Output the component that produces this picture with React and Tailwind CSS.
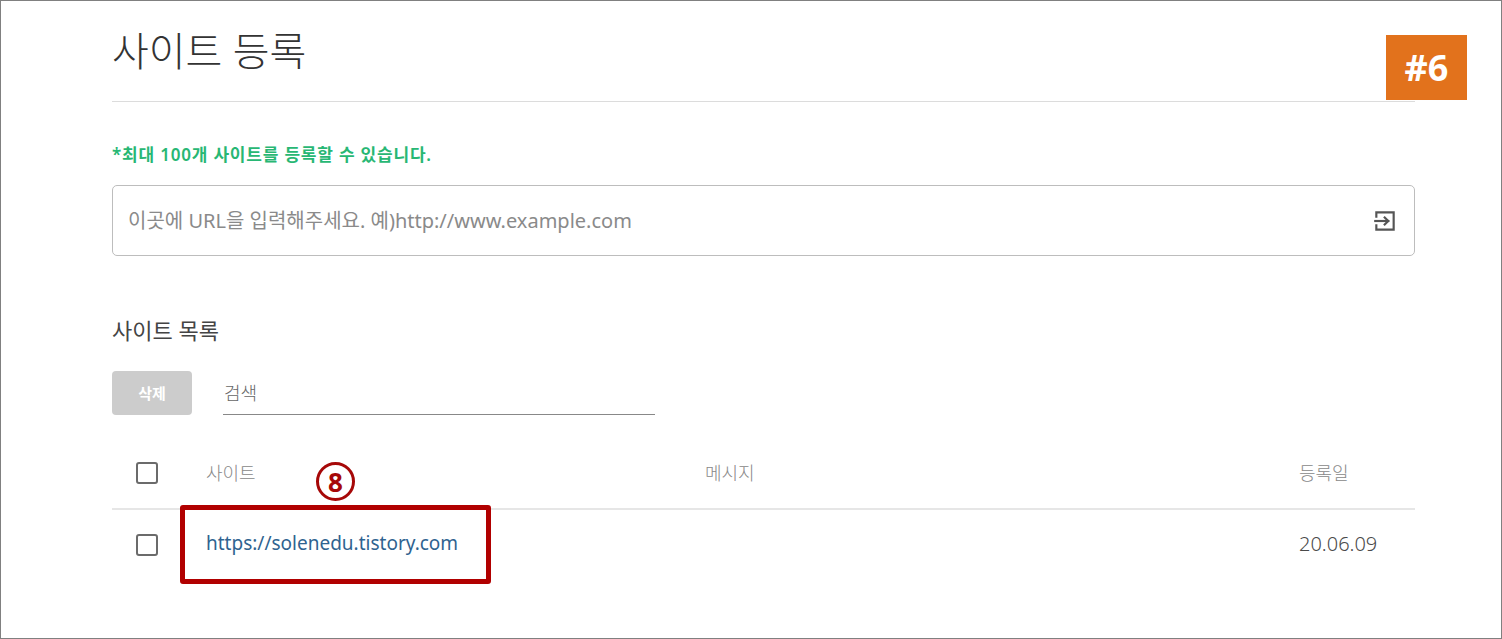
import React from "react";

const Checkbox = () => (
  <div className="w-[22px] h-[22px] border-2 border-[#6b6b6b] rounded-[3px] bg-white" />
);

const EnterIcon = () => (
  <svg width="26" height="26" viewBox="0 0 24 24" fill="none" stroke="#555" strokeWidth="2" strokeLinecap="square">
    <path d="M4 8V4h16v16H4v-4" />
    <path d="M3 12h12" />
    <path d="M11 8l4 4-4 4" strokeLinecap="butt" />
  </svg>
);

const App = () => {
  return (
    <div
      className="w-[1502px] h-[639px] border border-[#808080] bg-white overflow-hidden"
      style={{ fontFamily: '"Noto Sans", "Noto Sans CJK KR", sans-serif' }}
    >
      <div className="ml-[111px] w-[1303px]">
        <div className="flex items-start justify-between pt-[22px] border-b border-[#dcdcdc] h-[101px]">
          <h1 className="text-[40px] font-light text-[#333] leading-[56px]">사이트 등록</h1>
          <div className="mt-[12px] mr-[-52px] w-[81px] h-[65px] bg-[#e2721c] flex items-center justify-center">
            <span className="text-white text-[36px] font-bold leading-none">#6</span>
          </div>
        </div>

        <p className="mt-[42px] text-[17px] font-semibold text-[#28b774] leading-[22px] tracking-[0.8px]">
          *최대 100개 사이트를 등록할 수 있습니다.
        </p>

        <div className="mt-[19px] h-[71px] border border-[#bdbdbd] rounded-[5px] flex items-center justify-between pl-[15px] pr-[16px]">
          <span className="text-[20px] text-[#8a8a8a]">이곳에 URL을 입력해주세요. 예)http://www.example.com</span>
          <EnterIcon />
        </div>

        <h2 className="mt-[60px] text-[22px] text-[#444] leading-[28px]">사이트 목록</h2>

        <div className="mt-[27px] flex items-end gap-[31px]">
          <button className="w-[80px] h-[44px] bg-[#cccccc] rounded-[4px] text-white text-[15px] font-bold">
            삭제
          </button>
          <div className="w-[432px] border-b border-[#888] pb-[7px] pl-[1px]">
            <span className="text-[18px] text-[#666] font-light">검색</span>
          </div>
        </div>

        <div className="mt-[23px] relative">
          <div className="flex items-center h-[72px] border-b-2 border-[#e6e6e6] text-[18px] font-light text-[#888]">
            <div className="w-[94px] pl-[24px]">
              <Checkbox />
            </div>
            <div className="w-[499px]">사이트</div>
            <div className="flex-1">메시지</div>
            <div className="w-[116px]">등록일</div>
          </div>
          <div className="flex items-center h-[70px]">
            <div className="w-[94px] pl-[24px]">
              <Checkbox />
            </div>
            <div className="w-[499px] text-[19px] text-[#2f6390] mb-[3px]">https://solenedu.tistory.com</div>
            <div className="flex-1" />
            <div className="w-[116px] text-[20px] text-[#4a4a4a] font-light mb-[3px]">20.06.09</div>
          </div>

          <div className="absolute left-[204px] top-[24px] w-[39px] h-[39px] rounded-full border-[3px] border-[#a60808] flex items-center justify-center">
            <span className="text-[#a60808] text-[26px] font-bold leading-none">8</span>
          </div>
          <div className="absolute left-[68px] top-[67px] w-[311px] h-[79px] border-[5px] border-[#b10000] rounded-[3px]" />
        </div>
      </div>
    </div>
  );
};

export default App;
